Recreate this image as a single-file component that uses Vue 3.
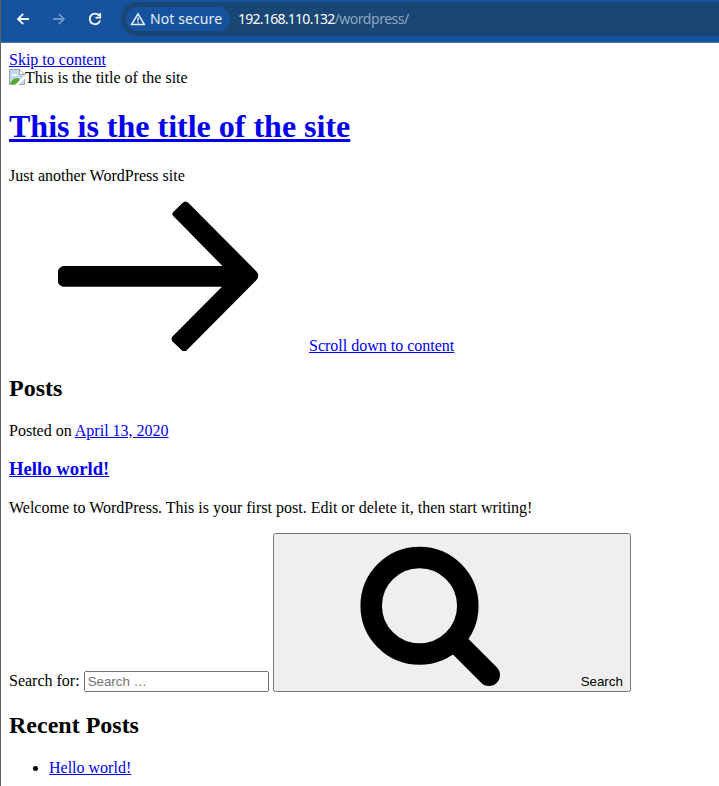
<script setup>
const address = { host: '192.168.110.132', path: '/wordpress/' }
const siteTitle = 'This is the title of the site'
const posts = [
  {
    date: 'April 13, 2020',
    title: 'Hello world!',
    body: 'Welcome to WordPress. This is your first post. Edit or delete it, then start writing!',
  },
]
</script>

<template>
  <div class="window">
    <header class="toolbar">
      <nav class="nav">
        <svg class="nav-icon" viewBox="0 0 16 16"><path d="M14 8H3M8.200 2.800 3 8 8.200 13.200" /></svg>
        <svg class="nav-icon muted" viewBox="0 0 16 16"><path d="M2 8h11M7.800 2.800 13 8 7.800 13.200" /></svg>
        <svg class="nav-icon" viewBox="0 0 16 16"><path d="M12.300 4.800A5.300 5.300 0 1 0 13.100 9.500M13.200 2v4.600H8.600" /></svg>
      </nav>
      <div class="omnibox">
        <span class="chip">
          <svg class="warn" viewBox="0 0 16 14"><path d="M8 1.8 14.400 12.600H1.600Z" /><path d="M8 5.500v3.300M8 9.800v1.500" /></svg>
          <span class="chip-text">Not secure</span>
        </span>
        <span class="host">{{ address.host }}</span><span class="path">{{ address.path }}</span>
      </div>
    </header>

    <main class="page">
      <a href="#content">Skip to content</a>
      <div class="logo">
        <svg class="broken" viewBox="0 0 16 16">
          <path d="M.5.5h10l5 5v10H.5z" fill="#c4d6f6" stroke="#a5a5a5" />
          <path d="M2.500 7c0-2 2-2 2.500-1 .5-2 3-1.500 3 1z" fill="#fff" />
          <path d="M1 15c1-3 4-6 6.500-6s3.500 1.500 4 2.500l-4 3.500z" fill="#54ab35" />
          <path d="M16 6v3.500L9.500 16H6z" fill="#fff" />
          <path d="M10.500.5v5h5z" fill="#fff" stroke="#a5a5a5" />
        </svg><span>{{ siteTitle }}</span>
      </div>
      <h1><a href="#home">{{ siteTitle }}</a></h1>
      <p>Just another WordPress site</p>
      <a href="#content"><svg width="300" height="150" viewBox="0 0 300 150"><path d="M54 65H213.500L164.300 15Q162.300 13 164.300 11L173.500 2Q176.500-1 179.500 2L247.500 70.500Q251 74.500 247.500 79L178 149L177 150H173.500L163.500 140.500Q161.500 138 163.500 135.500L213 85.800H54Q49 84 49 80.500V70.500Q49 67 54 65Z" /></svg>Scroll down to content</a>

      <h2>Posts</h2>
      <article v-for="post in posts" :key="post.title">
        <div>Posted on <a href="#date">{{ post.date }}</a></div>
        <h3><a href="#post">{{ post.title }}</a></h3>
        <p>{{ post.body }}</p>
      </article>

      <form @submit.prevent>
        <label for="search">Search for:</label>{{ ' ' }}<input id="search" type="search" placeholder="Search …" />{{ ' ' }}<button type="submit"><svg width="300" height="150" viewBox="0 0 300 150"><circle cx="138.500" cy="69.700" r="48.300" fill="none" stroke="#000" stroke-width="21.500" /><path d="m179 110 29 29" stroke="#000" stroke-width="22" stroke-linecap="round" /></svg><span>Search</span></button>
      </form>

      <h2>Recent Posts</h2>
      <ul>
        <li v-for="post in posts" :key="post.title"><a href="#post">{{ post.title }}</a></li>
      </ul>
    </main>
  </div>
</template>

<style>
body {
  margin: 0;
  background: #fff;
}
</style>

<style scoped>
.window {
  box-sizing: border-box;
  height: 786px;
  overflow: hidden;
  border-left: 1px solid #5f6063;
  font-family: "Liberation Serif", serif;
  font-size: 16px;
  color: #000;
}
.toolbar {
  box-sizing: border-box;
  display: flex;
  height: 43px;
  padding-top: 2px;
  border-bottom: 1px solid #4777b3;
  background: #15539e;
  font-family: "Noto Sans", sans-serif;
  font-size: 14px;
  line-height: 19px;
}
.nav {
  display: flex;
  gap: 20px;
  height: 34px;
  align-items: center;
  padding: 0 18px 0 14px;
}
.nav-icon {
  width: 16px;
  height: 16px;
  fill: none;
  stroke: #fff;
  stroke-width: 1.8;
}
.muted {
  stroke: #6d94c4;
}
.omnibox {
  flex: 1;
  display: flex;
  align-items: center;
  box-sizing: border-box;
  height: 34px;
  padding-left: 5px;
  border-radius: 17px 0 0 17px;
  background: #194674;
  white-space: nowrap;
}
.chip {
  display: flex;
  align-items: center;
  gap: 4px;
  box-sizing: border-box;
  width: 104px;
  height: 24px;
  padding-left: 4px;
  margin-right: 8px;
  border-radius: 12px;
  background: #15539e;
  color: #e8eef6;
}
.warn {
  width: 16px;
  height: 14px;
  fill: none;
  stroke: #e8eef6;
  stroke-width: 1.5;
}
.chip-text,
.host,
.path {
  padding-bottom: 1px;
}
.chip-text {
  letter-spacing: 0.1px;
}
.host {
  color: #fff;
  letter-spacing: -0.72px;
}
.path {
  color: #8fa7c1;
  letter-spacing: -0.47px;
}
.page {
  padding: 8px;
}
.logo {
  display: flex;
  height: 18px;
}
.broken {
  width: 16px;
  height: 16px;
}
a {
  color: #0000ee;
}
form {
  white-space: nowrap;
}
</style>
